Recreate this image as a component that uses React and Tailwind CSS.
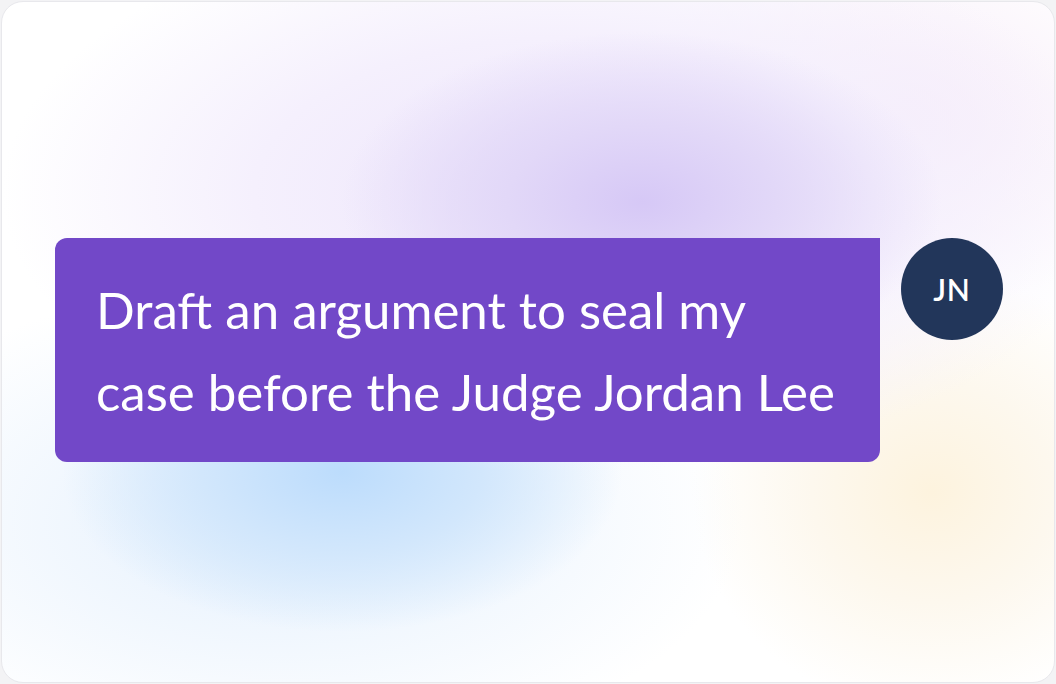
export default function App() {
  return (
    <div className="w-[1056px] h-[684px] bg-[#f3f3f5] p-px" style={{ fontFamily: "Lato, 'Noto Sans', sans-serif" }}>
      <div className="flex h-full w-full items-start gap-[21px] overflow-hidden rounded-[22px] border border-[#e8e8ec] bg-white bg-[radial-gradient(ellipse_300px_170px_at_640px_200px,#d6c8f6_0%,#e2d8f8_45%,transparent_100%),radial-gradient(ellipse_560px_280px_at_560px_190px,#ece4fb_0%,#f5f0fd_55%,transparent_100%),radial-gradient(ellipse_280px_160px_at_340px_470px,#bcdcfc_0%,#d2e7fc_50%,transparent_100%),radial-gradient(ellipse_460px_240px_at_280px_520px,#e4f0fd_0%,transparent_100%),radial-gradient(ellipse_240px_220px_at_930px_490px,#fdf3de_0%,#fdf8ee_50%,transparent_100%),radial-gradient(ellipse_280px_190px_at_900px_120px,#f6eaf8_0%,transparent_100%)] pl-[53px] pt-[236px]">
        <div className="h-[224px] w-[825px] rounded-[12px] rounded-tr-none bg-[#7248c8] px-[41px] pt-[31px] text-[51px] leading-[82px] text-white">
          <p>Draft an argument to seal my</p>
          <p>case before the Judge Jordan Lee</p>
        </div>
        <div className="flex h-[102px] w-[102px] items-center justify-center rounded-full bg-[#22365a] text-[30px] font-semibold tracking-wide text-white">
          JN
        </div>
      </div>
    </div>
  );
}
